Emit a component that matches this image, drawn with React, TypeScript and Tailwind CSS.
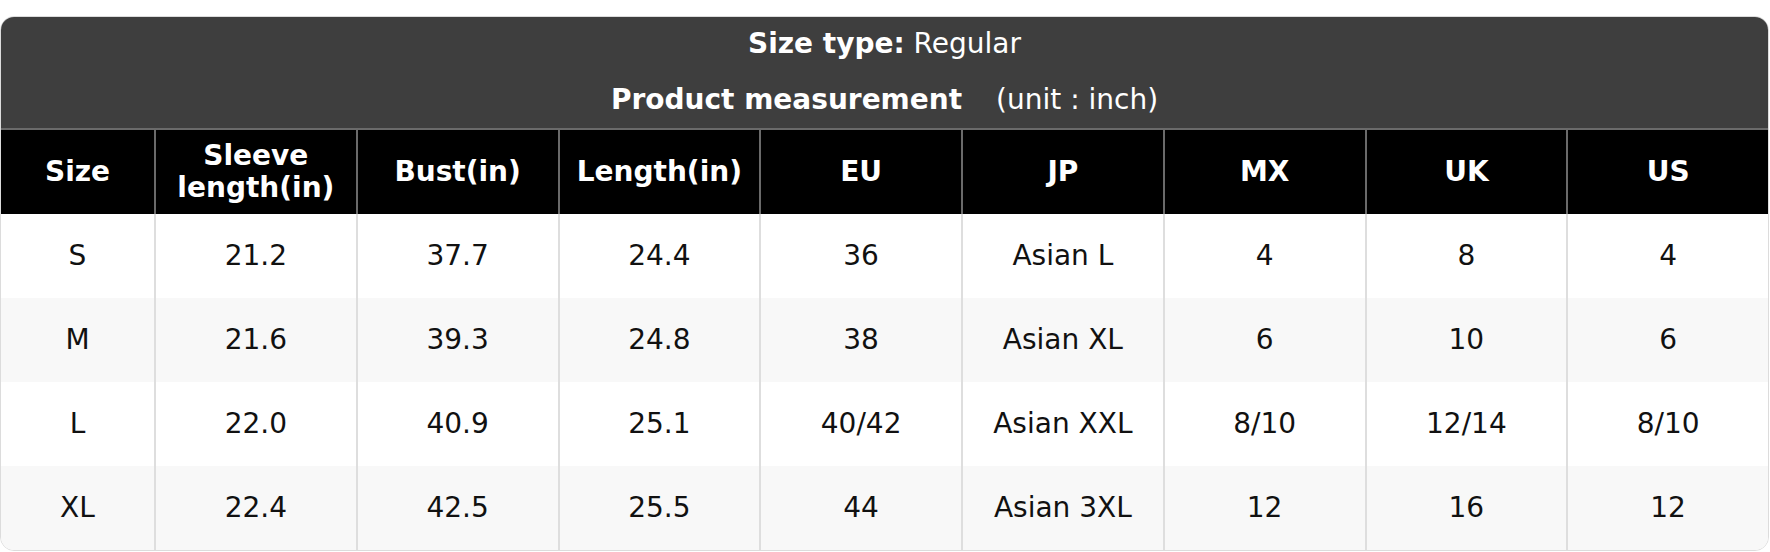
import React from "react";

const headers = ["Size", "Sleeve length(in)", "Bust(in)", "Length(in)", "EU", "JP", "MX", "UK", "US"];

const rows = [
    ["S", "21.2", "37.7", "24.4", "36", "Asian L", "4", "8", "4"],
    ["M", "21.6", "39.3", "24.8", "38", "Asian XL", "6", "10", "6"],
    ["L", "22.0", "40.9", "25.1", "40/42", "Asian XXL", "8/10", "12/14", "8/10"],
    ["XL", "22.4", "42.5", "25.5", "44", "Asian 3XL", "12", "16", "12"],
];

export default function App() {
    return (
        <div className="w-[1770px] h-[552px] bg-white pt-[16px] font-['DejaVu_Sans',sans-serif]">
            <div className="w-[1769px] rounded-[14px] border border-[#dcdcdc] overflow-hidden">
                <div className="h-[111px] bg-[#3e3e3e] text-white text-[28px] flex flex-col items-center">
                    <div className="h-[54px] flex items-center">
                        <span className="font-bold">Size type:</span>&nbsp;<span>Regular</span>
                    </div>
                    <div className="h-[57px] flex items-center">
                        <span className="font-bold">Product measurement</span>
                        <span className="ml-[34px]">(unit : inch)</span>
                    </div>
                </div>

                <div className="grid grid-cols-[153px_repeat(8,1fr)] h-[86px] bg-black text-white border-t-2 border-[#6a6a6a]">
                    {headers.map((h, i) => (
                        <div
                            key={h}
                            className={
                                i === 0
                                    ? "flex items-center justify-center text-center text-[28px] font-bold leading-[32px]"
                                    : "flex items-center justify-center text-center text-[28px] font-bold leading-[32px] border-l-2 border-[#6a6a6a]"
                            }
                        >
                            {h === "Sleeve length(in)" ? (
                                <span>Sleeve<br />length(in)</span>
                            ) : (
                                h
                            )}
                        </div>
                    ))}
                </div>

                {rows.map((r, ri) => (
                    <div
                        key={r[0]}
                        className={
                            ri % 2 === 1
                                ? "grid grid-cols-[153px_repeat(8,1fr)] h-[84px] bg-[#f8f8f8]"
                                : "grid grid-cols-[153px_repeat(8,1fr)] h-[84px] bg-white"
                        }
                    >
                        {r.map((c, ci) => (
                            <div
                                key={ci}
                                className={
                                    ci === 0
                                        ? "flex items-center justify-center text-[28px] text-[#111]"
                                        : "flex items-center justify-center text-[28px] text-[#111] border-l-2 border-[#dedede]"
                                }
                            >
                                {c}
                            </div>
                        ))}
                    </div>
                ))}
            </div>
        </div>
    );
}
